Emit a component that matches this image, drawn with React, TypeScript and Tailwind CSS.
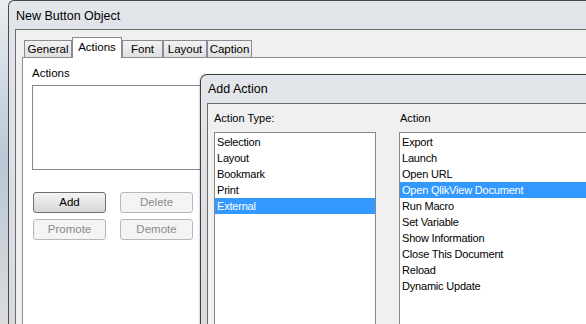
const actionTypes = ["Selection", "Layout", "Bookmark", "Print", "External"];
const actions = [
  "Export",
  "Launch",
  "Open URL",
  "Open QlikView Document",
  "Run Macro",
  "Set Variable",
  "Show Information",
  "Close This Document",
  "Reload",
  "Dynamic Update",
];

const tabs = [
  { label: "General", w: "w-[48px]" },
  { label: "Actions", w: "w-[50px]", active: true },
  { label: "Font", w: "w-[41px]" },
  { label: "Layout", w: "w-[44px]" },
  { label: "Caption", w: "w-[45px]" },
];

function ListBox({ items, selected, width }: { items: string[]; selected: string; width: string }) {
  return (
    <div className={`${width} h-[220px] shrink-0 bg-white border border-[#828790] pt-px`}>
      {items.map((it) => (
        <div
          key={it}
          className={`h-[16px] leading-[16px] px-[2px] text-[11px] tracking-[-0.2px] ${
            it === selected ? "bg-[#3399ff] text-white" : "text-black"
          }`}
        >
          {it}
        </div>
      ))}
    </div>
  );
}

function Btn({ label, enabled }: { label: string; enabled?: boolean }) {
  return (
    <div
      className={`w-[73px] h-[21px] flex items-center justify-center rounded-[3px] border text-[11.5px] ${
        enabled
          ? "border-[#707070] bg-gradient-to-b from-[#f4f4f4] to-[#d6d6d6] text-black"
          : "border-[#b5b9bc] bg-[#f4f4f4] text-[#8a8a8a]"
      }`}
    >
      {label}
    </div>
  );
}

export default function App() {
  return (
    <div
      className="relative w-[586px] h-[324px] overflow-hidden bg-gradient-to-b from-[#e9edf1] via-[#b9c7d6] to-[#dcdcdc]"
      style={{ fontFamily: '"Liberation Sans", Arial, sans-serif' }}
    >
      {/* New Button Object window */}
      <div className="absolute left-[8px] top-0 right-[-20px] bottom-[-20px] flex flex-col border-l border-t border-[#4a4a4a] rounded-tl-[6px] bg-gradient-to-b from-[#e2e5e9] to-[#d6dade] pl-[6px]">
        <div className="h-[28px] shrink-0 flex items-center pl-[1px] pt-[2px] text-[12.5px] text-black">New Button Object</div>
        <div className="flex-1 flex flex-col border-l border-t border-[#6b6b6b] bg-[#f0f0f0] pl-[6px] pt-[7px]">
          <div className="h-[20px] flex items-end pl-[2px] relative z-10">
            {tabs.map((t) =>
              t.active ? (
                <div
                  key={t.label}
                  className={`${t.w} h-[21px] -mb-px bg-white border-l border-t border-r border-[#898c95] flex items-center justify-center text-[11.5px] text-black`}
                >
                  {t.label}
                </div>
              ) : (
                <div
                  key={t.label}
                  className={`${t.w} h-[17px] bg-gradient-to-b from-[#f2f2f2] to-[#e0e0e0] border-l border-t border-r border-[#898c95] flex items-center justify-center pt-px text-[11.5px] text-black`}
                >
                  {t.label}
                </div>
              )
            )}
          </div>
          <div className="flex-1 bg-white border-l border-t border-[#898c95] pl-[9px] pt-[8px]">
            <div className="h-[14px] leading-[14px] text-[11.5px] text-black">Actions</div>
            <div className="mt-[5px] w-[260px] h-[85px] border border-[#828790] bg-white" />
            <div className="mt-[22px] pl-px flex flex-col gap-[6px]">
              <div className="flex gap-[14px]">
                <Btn label="Add" enabled />
                <Btn label="Delete" />
              </div>
              <div className="flex gap-[14px]">
                <Btn label="Promote" />
                <Btn label="Demote" />
              </div>
            </div>
          </div>
        </div>
      </div>

      {/* Add Action dialog */}
      <div className="absolute left-[200px] top-[74px] right-[-20px] bottom-[-20px] flex flex-col border-l border-t border-[#3f3f3f] rounded-tl-[7px] bg-gradient-to-b from-[#e3e6ea] to-[#d8dce1] pl-[6px] shadow-[-1px_0_2px_rgba(0,0,0,0.15)]">
        <div className="h-[28px] shrink-0 flex items-center pl-[1px] pt-px text-[12.5px] text-black">Add Action</div>
        <div className="flex-1 border-l border-t border-[#6b6b6b] bg-[#f0f0f0] pl-[6px] pt-[7px]">
          <div className="flex gap-[23px]">
            <div className="flex flex-col">
              <div className="h-[14px] leading-[14px] text-[11px] text-black">Action Type:</div>
              <div className="mt-[7px]">
                <ListBox items={actionTypes} selected="External" width="w-[162px]" />
              </div>
            </div>
            <div className="flex flex-col">
              <div className="h-[14px] leading-[14px] text-[11px] text-black pl-px">Action</div>
              <div className="mt-[7px]">
                <ListBox items={actions} selected="Open QlikView Document" width="w-[220px]" />
              </div>
            </div>
          </div>
        </div>
      </div>
    </div>
  );
}
